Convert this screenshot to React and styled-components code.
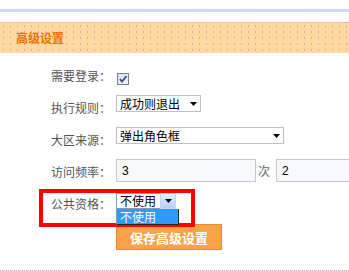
import styled, { createGlobalStyle } from "styled-components";

const GlobalStyle = createGlobalStyle`
  html, body {
    margin: 0;
    padding: 0;
    background: #fff;
    overflow: hidden;
  }
  body {
    font-family: "Noto Sans CJK SC", sans-serif;
    font-size: 12px;
    color: #555;
  }
`;

const ArrowIcon = () => (
  <svg width="7" height="4" viewBox="0 0 7 4">
    <path d="M0 0h7L3.5 4z" fill="#000" />
  </svg>
);

const CheckIcon = () => (
  <svg width="10" height="10" viewBox="0 0 10 10">
    <path d="M2 5 L4 7.5 L8.5 2" fill="none" stroke="#2f4f9a" strokeWidth="1.8" />
  </svg>
);

export default function App() {
  return (
    <Page>
      <GlobalStyle />
      <TopRule />
      <Header>
        <Title>高级设置</Title>
      </Header>
      <Form>
        <Row>
          <Label>需要登录：</Label>
          <Field $top={13}>
            <Checkbox>
              <CheckIcon />
            </Checkbox>
          </Field>
        </Row>
        <Row>
          <Label>执行规则：</Label>
          <Field>
            <Select $w={85}>
              成功则退出
              <ArrowSlot>
                <ArrowIcon />
              </ArrowSlot>
            </Select>
          </Field>
        </Row>
        <Row>
          <Label>大区来源：</Label>
          <Field>
            <Select $w={168}>
              弹出角色框
              <ArrowSlot>
                <ArrowIcon />
              </ArrowSlot>
            </Select>
          </Field>
        </Row>
        <Row>
          <Label>访问频率：</Label>
          <Field>
            <TextInput readOnly value="3" />
            <Unit>次</Unit>
            <TextInput readOnly value="2" />
          </Field>
        </Row>
        <Row>
          <Annotation />
          <Label>公共资格：</Label>
          <Field $top={5}>
            <Combo>
              <ComboText>不使用</ComboText>
              <ComboButton>
                <ArrowIcon />
              </ComboButton>
              <DropList>不使用</DropList>
            </Combo>
          </Field>
        </Row>
        <ButtonRow>
          <SaveButton>保存高级设置</SaveButton>
        </ButtonRow>
      </Form>
      <BottomRule />
    </Page>
  );
}

const Page = styled.div`
  width: 100%;
  padding-top: 9px;
`;

const TopRule = styled.div`
  height: 3px;
  background: #cfdbf1;
`;

const Header = styled.div`
  margin-top: 10px;
  height: 31px;
  box-sizing: border-box;
  border-top: 1px dotted #f2ad5c;
  background-color: #ffd8a2;
  background-image: radial-gradient(circle, #f2a3a0 0.7px, transparent 1px);
  background-size: 7px 6px;
  padding-left: 16px;
`;

const Title = styled.div`
  line-height: 29px;
  font-size: 12px;
  font-weight: 700;
  color: #ea7100;
`;

const Form = styled.div`
  padding-top: 7px;
  overflow: hidden;
`;

const Row = styled.div`
  position: relative;
  display: flex;
  align-items: flex-start;
  height: 32px;
  white-space: nowrap;
`;

const Label = styled.div`
  width: 111px;
  flex-shrink: 0;
  text-align: right;
  line-height: 32px;
  color: #555;
`;

const Field = styled.div`
  display: flex;
  align-items: center;
  margin: ${(p) => p.$top ?? 3}px 0 0 5px;
  flex-shrink: 0;
`;

const Checkbox = styled.span`
  width: 12px;
  height: 12px;
  margin-left: 1px;
  box-sizing: border-box;
  border: 1px solid #7c8088;
  background: linear-gradient(135deg, #dcdce4, #f8f8fa);
  display: flex;
  align-items: center;
  justify-content: center;
`;

const Select = styled.div`
  width: ${(p) => p.$w}px;
  height: 17px;
  box-sizing: border-box;
  border: 1px solid #bcc1c9;
  background: #fff;
  display: flex;
  align-items: center;
  padding-left: 3px;
  color: #000;
  font-size: 12px;
  line-height: 15px;
`;

const ArrowSlot = styled.span`
  margin-left: auto;
  margin-right: 3px;
  display: flex;
`;

const TextInput = styled.input`
  width: 140px;
  height: 23px;
  flex-shrink: 0;
  box-sizing: border-box;
  border: 1px solid #c5c9cd;
  background: #f7f8fa;
  padding: 0 0 0 5px;
  margin: 0;
  font-family: "Liberation Sans", Arial, sans-serif;
  font-size: 12px;
  color: #000;
  outline: none;
`;

const Unit = styled.span`
  margin: 0 6px 0 2px;
  color: #5c6670;
`;

const Combo = styled.div`
  position: relative;
  display: flex;
  height: 16px;
`;

const ComboText = styled.div`
  width: 44px;
  height: 16px;
  box-sizing: border-box;
  border: 1px solid #7f9db9;
  border-right: none;
  background: #fff;
  padding-left: 3px;
  color: #000;
  font-size: 12px;
  line-height: 14px;
`;

const ComboButton = styled.div`
  width: 16px;
  height: 16px;
  box-sizing: border-box;
  border: 1px solid #c3d3f4;
  background: linear-gradient(#e8f0fd, #b4cef2);
  display: flex;
  align-items: center;
  justify-content: center;
`;

const DropList = styled.div`
  position: absolute;
  top: 100%;
  left: 0;
  z-index: 3;
  width: 63px;
  height: 16px;
  box-sizing: border-box;
  background: #3399ff;
  border-left: 1px solid #9a9a9a;
  border-right: 1px solid #222;
  border-bottom: 1px solid #222;
  padding-left: 3px;
  color: #fff;
  font-size: 12px;
  line-height: 15px;
`;

const Annotation = styled.div`
  position: absolute;
  left: 39px;
  top: 1px;
  z-index: 2;
  width: 156px;
  height: 38px;
  box-sizing: border-box;
  border: 4px solid #ff0000;
  pointer-events: none;
`;

const ButtonRow = styled.div`
  margin-top: 4px;
  padding-left: 116px;
`;

const SaveButton = styled.button`
  width: 106px;
  height: 26px;
  box-sizing: border-box;
  margin: 0;
  padding: 0;
  border: 1px solid #e58b32;
  background-color: #f9a246;
  background-image: radial-gradient(circle, #f49a70 0.6px, transparent 1px);
  background-size: 5px 5px;
  color: #fff;
  font-family: "Noto Sans CJK SC", sans-serif;
  font-size: 13px;
  font-weight: 700;
  display: block;
`;

const BottomRule = styled.div`
  margin-top: 20px;
  border-top: 1px dotted #aeb4b8;
`;
